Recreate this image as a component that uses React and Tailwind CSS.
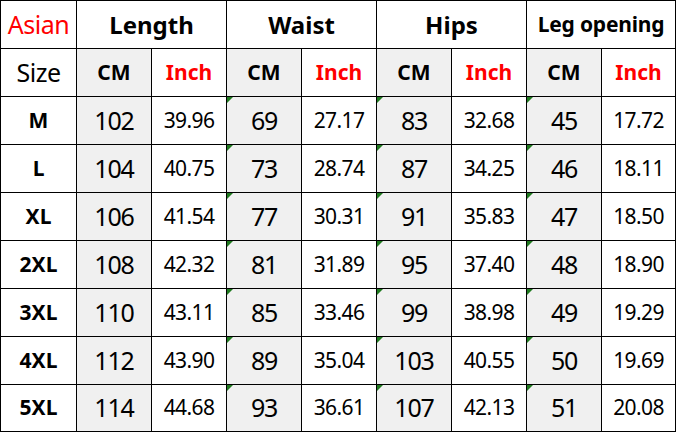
import React from "react";

const rows = [
  ["M", "102", "39.96", "69", "27.17", "83", "32.68", "45", "17.72"],
  ["L", "104", "40.75", "73", "28.74", "87", "34.25", "46", "18.11"],
  ["XL", "106", "41.54", "77", "30.31", "91", "35.83", "47", "18.50"],
  ["2XL", "108", "42.32", "81", "31.89", "95", "37.40", "48", "18.90"],
  ["3XL", "110", "43.11", "85", "33.46", "99", "38.98", "49", "19.29"],
  ["4XL", "112", "43.90", "89", "35.04", "103", "40.55", "50", "19.69"],
  ["5XL", "114", "44.68", "93", "36.61", "107", "42.13", "51", "20.08"],
];

function Tri() {
  return (
    <span className="absolute left-0 top-0 h-0 w-0 border-l-[6px] border-b-[6px] border-l-[#1f7a1f] border-b-transparent" />
  );
}

export default function App() {
  const cell = "relative flex items-center justify-center bg-white";
  const gray = "relative flex items-center justify-center bg-[#f0f0f0]";
  return (
    <div
      className="w-[676px] h-[433px] bg-white"
      style={{ fontFamily: '"Noto Sans", "Open Sans", sans-serif' }}
    >
      <div className="grid grid-cols-[75px_74px_74px_74px_74px_74px_74px_74px_73px] grid-rows-[47px_47px_47px_47px_47px_47px_47px_47px_46px] gap-px bg-black p-px w-[676px] h-[432px] text-black">
        <div className={`${cell} text-[25px] text-[#f00] tracking-[-0.5px]`}>Asian</div>
        <div className={`${cell} col-span-2 text-[24px] font-bold`}>Length</div>
        <div className={`${cell} col-span-2 text-[24px] font-bold`}>Waist</div>
        <div className={`${cell} col-span-2 text-[24px] font-bold`}>Hips</div>
        <div className={`${cell} col-span-2 text-[21px] font-bold tracking-[-0.2px]`}>Leg opening</div>

        <div className={`${cell} text-[25px] tracking-[-0.5px]`}>Size</div>
        {[0, 1, 2, 3].map((i) => (
          <React.Fragment key={i}>
            <div className={`${gray} text-[21px] font-bold`}>CM</div>
            <div className={`${cell} text-[21px] font-bold text-[#f00]`}>Inch</div>
          </React.Fragment>
        ))}

        {rows.map((r) => (
          <React.Fragment key={r[0]}>
            <div className={`${cell} text-[21px] font-bold`}>{r[0]}</div>
            {[1, 3, 5, 7].map((j) => (
              <React.Fragment key={j}>
                <div className={`${gray} text-[25px] tracking-[-1.2px]`}>
                  {j > 1 && <Tri />}
                  {r[j]}
                </div>
                <div className={`${cell} text-[21px] tracking-[-0.6px]`}>{r[j + 1]}</div>
              </React.Fragment>
            ))}
          </React.Fragment>
        ))}
      </div>
    </div>
  );
}
